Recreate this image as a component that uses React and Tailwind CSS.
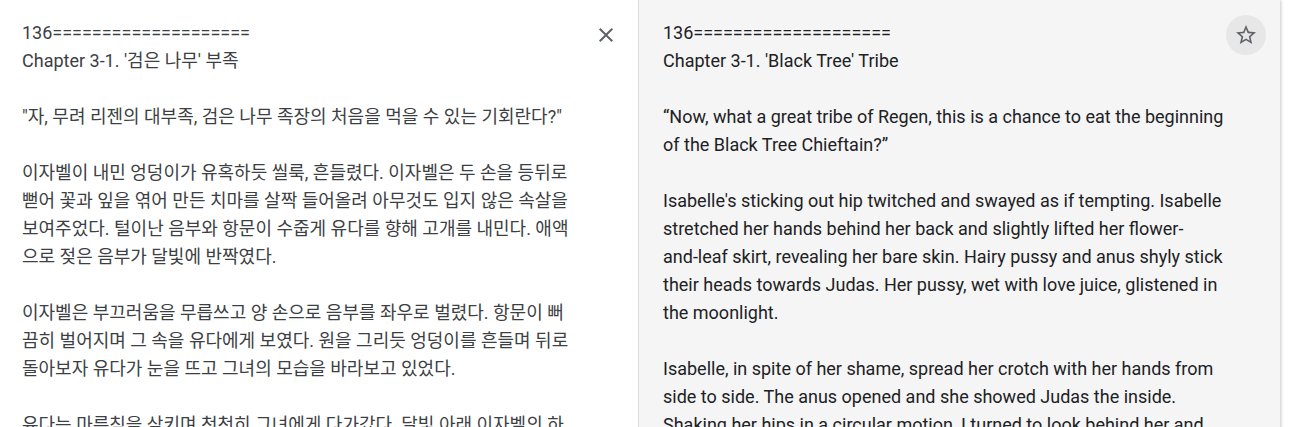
const font = { fontFamily: 'Roboto, "Noto Sans CJK KR", "Liberation Sans", sans-serif' }

const source = [
    ['136====================', 'Chapter 3-1. \'검은 나무\' 부족'],
    ['"자, 무려 리젠의 대부족, 검은 나무 족장의 처음을 먹을 수 있는 기회란다?"'],
    ['이자벨이 내민 엉덩이가 유혹하듯 씰룩, 흔들렸다. 이자벨은 두 손을 등뒤로 뻗어 꽃과 잎을 엮어 만든 치마를 살짝 들어올려 아무것도 입지 않은 속살을 보여주었다. 털이난 음부와 항문이 수줍게 유다를 향해 고개를 내민다. 애액으로 젖은 음부가 달빛에 반짝였다.'],
    ['이자벨은 부끄러움을 무릅쓰고 양 손으로 음부를 좌우로 벌렸다. 항문이 뻐끔히 벌어지며 그 속을 유다에게 보였다. 원을 그리듯 엉덩이를 흔들며 뒤로 돌아보자 유다가 눈을 뜨고 그녀의 모습을 바라보고 있었다.'],
    ['유다는 마른침을 삼키며 천천히 그녀에게 다가갔다. 달빛 아래 이자벨의 하얀 피부가 더욱 눈부시게 빛나고 있었다.'],
]

const target = [
    ['136====================', 'Chapter 3-1. \'Black Tree\' Tribe'],
    ['\u201cNow, what a great tribe of Regen, this is a chance to eat the beginning of the Black Tree Chieftain?\u201d'],
    [
        <>
            Isabelle's sticking out hip twitched and swayed as if tempting. Isabelle stretched her hands behind her back and slightly lifted her flower-<span className="whitespace-nowrap">and-leaf</span> skirt, revealing her bare skin. Hairy pussy and anus shyly stick their heads towards Judas. Her pussy, wet with love juice, glistened in the moonlight.
        </>,
    ],
    ['Isabelle, in spite of her shame, spread her crotch with her hands from side to side. The anus opened and she showed Judas the inside. Shaking her hips in a circular motion, I turned to look behind her and Judas was watching her.'],
]

const Paragraphs = ({ items }) => (
    <div className="flex flex-col gap-[28px]">
        {items.map((lines, i) => (
            <div key={i}>
                {lines.map((line, j) => (
                    <p key={j}>{line}</p>
                ))}
            </div>
        ))}
    </div>
)

export default function App() {
    return (
        <div className="w-[1306px] h-[427px] overflow-hidden bg-white" style={font}>
            <div className="flex w-[1280px] min-h-[427px] shadow-[1px_0_3px_rgba(0,0,0,0.22)]">
                {/* source side */}
                <div className="flex w-[639px] shrink-0 bg-white border-r border-[#dadce0] pt-[19px] pl-[22px] pr-[20px]">
                    <div className="w-[556px] text-[18px] leading-[28px] text-[#3c4043]">
                        <Paragraphs items={source} />
                    </div>
                    <button className="ml-[17px] mt-[4px] w-[24px] h-[24px] self-start flex items-center justify-center">
                        <svg width="24" height="24" viewBox="0 0 24 24" fill="#5f6368">
                            <path d="M19 6.41L17.59 5 12 10.59 6.41 5 5 6.41 10.59 12 5 17.59 6.41 19 12 13.41 17.59 19 19 17.59 13.41 12z" />
                        </svg>
                    </button>
                </div>

                {/* translation side */}
                <div className="flex w-[641px] shrink-0 bg-[#f5f5f5] pt-[19px] pl-[24px] pr-[11px]">
                    <div className="w-[563px] text-[18px] leading-[28px] text-[#202124]">
                        <Paragraphs items={target} />
                    </div>
                    <button className="ml-[0px] -mt-[4px] w-[40px] h-[40px] self-start rounded-full bg-[#e7e7e7] flex items-center justify-center">
                        <svg width="24" height="24" viewBox="0 0 24 24" fill="#5f6368">
                            <path d="M22 9.24l-7.19-.62L12 2 9.19 8.63 2 9.24l5.46 4.73L5.82 21 12 17.27 18.18 21l-1.63-7.03L22 9.24zM12 15.4l-3.76 2.27 1-4.28-3.32-2.88 4.38-.38L12 6.1l1.71 4.04 4.38.38-3.32 2.88 1 4.28L12 15.4z" />
                        </svg>
                    </button>
                </div>
            </div>
        </div>
    )
}
